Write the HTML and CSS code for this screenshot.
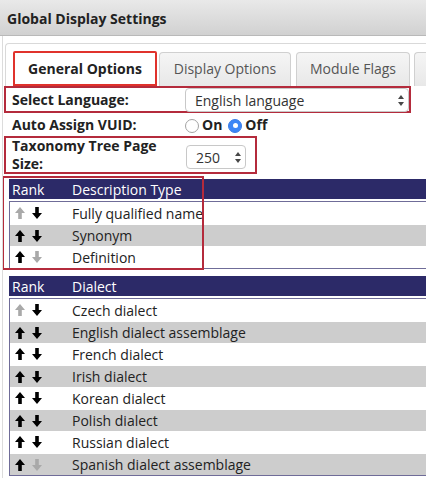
FILE: index.html
```html
<!DOCTYPE html>
<html>
<head>
<meta charset="utf-8">
<link rel="stylesheet" href="styles.css">
</head>
<body>
<div class="titlebar">Global Display Settings</div>
<div class="panel">
  <div class="tabs-nav">
    <div class="tab active">General Options</div>
    <div class="tab t-display">Display Options</div>
    <div class="tab t-module">Module Flags</div>
    <div class="tab t-more"></div>
  </div>

  <div class="field marked">
    <span class="lbl">Select Language:</span>
    <div class="select lang"><span>English language</span>
      <svg class="updown" width="6" height="11" viewBox="0 0 6 11"><path d="M3 0 L6 4 H0Z M0 7 H6 L3 11Z"/></svg>
    </div>
  </div>

  <div class="field plain">
    <span class="lbl">Auto Assign VUID:</span>
    <span class="radio"></span><span class="opt">On</span>
    <span class="radio on"></span><span class="opt">Off</span>
  </div>

  <div class="field marked tall">
    <span class="lbl two">Taxonomy Tree Page<br>Size:</span>
    <div class="select num"><span>250</span>
      <svg class="updown" width="6" height="11" viewBox="0 0 6 11"><path d="M3 0 L6 4 H0Z M0 7 H6 L3 11Z"/></svg>
    </div>
  </div>

  <div class="grid desc">
    <div class="overlay"></div>
    <div class="thead"><span class="hc1">Rank</span><span>Description Type</span></div>
    <div class="tbody">
      <div class="row"><span class="rank"><svg class="arr off" viewBox="0 0 10 12"><path d="M5 0 L10 6 H6.8 V12 H3.2 V6 H0 Z"/></svg><svg class="arr dn" viewBox="0 0 10 12"><path d="M5 0 L10 6 H6.8 V12 H3.2 V6 H0 Z"/></svg></span><span>Fully qualified name</span></div>
      <div class="row alt"><span class="rank"><svg class="arr" viewBox="0 0 10 12"><path d="M5 0 L10 6 H6.8 V12 H3.2 V6 H0 Z"/></svg><svg class="arr dn" viewBox="0 0 10 12"><path d="M5 0 L10 6 H6.8 V12 H3.2 V6 H0 Z"/></svg></span><span>Synonym</span></div>
      <div class="row"><span class="rank"><svg class="arr" viewBox="0 0 10 12"><path d="M5 0 L10 6 H6.8 V12 H3.2 V6 H0 Z"/></svg><svg class="arr dn off" viewBox="0 0 10 12"><path d="M5 0 L10 6 H6.8 V12 H3.2 V6 H0 Z"/></svg></span><span>Definition</span></div>
    </div>
  </div>

  <div class="grid dialect">
    <div class="thead"><span class="hc1">Rank</span><span>Dialect</span></div>
    <div class="tbody">
      <div class="row"><span class="rank"><svg class="arr off" viewBox="0 0 10 12"><path d="M5 0 L10 6 H6.8 V12 H3.2 V6 H0 Z"/></svg><svg class="arr dn" viewBox="0 0 10 12"><path d="M5 0 L10 6 H6.8 V12 H3.2 V6 H0 Z"/></svg></span><span>Czech dialect</span></div>
      <div class="row alt"><span class="rank"><svg class="arr" viewBox="0 0 10 12"><path d="M5 0 L10 6 H6.8 V12 H3.2 V6 H0 Z"/></svg><svg class="arr dn" viewBox="0 0 10 12"><path d="M5 0 L10 6 H6.8 V12 H3.2 V6 H0 Z"/></svg></span><span>English dialect assemblage</span></div>
      <div class="row"><span class="rank"><svg class="arr" viewBox="0 0 10 12"><path d="M5 0 L10 6 H6.8 V12 H3.2 V6 H0 Z"/></svg><svg class="arr dn" viewBox="0 0 10 12"><path d="M5 0 L10 6 H6.8 V12 H3.2 V6 H0 Z"/></svg></span><span>French dialect</span></div>
      <div class="row alt"><span class="rank"><svg class="arr" viewBox="0 0 10 12"><path d="M5 0 L10 6 H6.8 V12 H3.2 V6 H0 Z"/></svg><svg class="arr dn" viewBox="0 0 10 12"><path d="M5 0 L10 6 H6.8 V12 H3.2 V6 H0 Z"/></svg></span><span>Irish dialect</span></div>
      <div class="row"><span class="rank"><svg class="arr" viewBox="0 0 10 12"><path d="M5 0 L10 6 H6.8 V12 H3.2 V6 H0 Z"/></svg><svg class="arr dn" viewBox="0 0 10 12"><path d="M5 0 L10 6 H6.8 V12 H3.2 V6 H0 Z"/></svg></span><span>Korean dialect</span></div>
      <div class="row alt"><span class="rank"><svg class="arr" viewBox="0 0 10 12"><path d="M5 0 L10 6 H6.8 V12 H3.2 V6 H0 Z"/></svg><svg class="arr dn" viewBox="0 0 10 12"><path d="M5 0 L10 6 H6.8 V12 H3.2 V6 H0 Z"/></svg></span><span>Polish dialect</span></div>
      <div class="row"><span class="rank"><svg class="arr" viewBox="0 0 10 12"><path d="M5 0 L10 6 H6.8 V12 H3.2 V6 H0 Z"/></svg><svg class="arr dn" viewBox="0 0 10 12"><path d="M5 0 L10 6 H6.8 V12 H3.2 V6 H0 Z"/></svg></span><span>Russian dialect</span></div>
      <div class="row alt"><span class="rank"><svg class="arr" viewBox="0 0 10 12"><path d="M5 0 L10 6 H6.8 V12 H3.2 V6 H0 Z"/></svg><svg class="arr dn off" viewBox="0 0 10 12"><path d="M5 0 L10 6 H6.8 V12 H3.2 V6 H0 Z"/></svg></span><span>Spanish dialect assemblage</span></div>
    </div>
  </div>
</div>
</body>
</html>
```

FILE: styles.css
```css
html, body {
  margin: 0;
  padding: 0;
  background: #fff;
  overflow: hidden;
}
body {
  font-family: "Open Sans", "Noto Sans", sans-serif;
  font-size: 14px;
  color: #222;
  width: 426px;
  height: 478px;
}

.titlebar {
  box-sizing: border-box;
  height: 36px;
  line-height: 35px;
  padding: 1px 0 0 7px;
  border-bottom: 1px solid #b9b9b9;
  background: linear-gradient(#e9e9e9, #d1d1d1);
  font-weight: 700;
  color: #222;
  white-space: nowrap;
}

.panel {
  margin-left: 2px;
  border-left: 1px solid #dcdcdc;
  height: 442px;
  overflow: hidden;
}

.tabs-nav {
  margin: 7px 0 0 2px;
  border-top: 1px solid #d9d9d9;
  border-left: 1px solid #d9d9d9;
  border-top-left-radius: 4px;
  padding: 7px 0 0 7px;
  display: flex;
  align-items: flex-end;
  white-space: nowrap;
  overflow: hidden;
}
.tab {
  box-sizing: border-box;
  height: 34px;
  line-height: 32px;
  text-align: center;
  border: 1px solid #d0d0d0;
  border-bottom: none;
  border-radius: 4px 4px 0 0;
  background: linear-gradient(#f5f5f5, #e8e8e8);
  color: #555;
  flex: none;
}
.tab.active {
  width: 144px;
  height: 35px;
  line-height: 31px;
  border: 2px solid #e0322c;
  border-radius: 2px 2px 0 0;
  background: #fff;
  color: #222;
  font-weight: 700;
}
.t-display { width: 132px; margin-left: 2px; }
.t-module { width: 114px; margin-left: 5px; }
.t-more { width: 12px; margin-left: 4px; border-right: none; border-radius: 4px 0 0 0; }

.field {
  box-sizing: border-box;
  margin-left: 1px;
  border: 2px solid transparent;
  padding-left: 6px;
  display: flex;
  align-items: center;
  height: 27px;
  width: 407px;
}
.field.marked { border-color: #b42b3c; }
.field.plain { height: 23px; }
.field.tall {
  width: 253px;
  height: 38px;
  padding-right: 9px;
}
.lbl {
  width: 173px;
  flex: none;
  font-weight: 700;
  color: #222;
  white-space: nowrap;
}
.lbl.two {
  line-height: 18px;
  margin-top: -1px;
  white-space: normal;
}

.select {
  box-sizing: border-box;
  height: 24px;
  border: 1px solid #c8c8c8;
  border-radius: 4px;
  background: #fff;
  display: flex;
  align-items: center;
  justify-content: space-between;
  padding: 0 4px 0 9px;
  color: #333;
}
.select.lang {
  width: 224px;
  margin-top: -1px;
  margin-bottom: -2px;
}
.select.num {
  width: 60px;
  margin-left: 1px;
  margin-top: 4px;
}
.updown { fill: #474747; flex: none; }

.radio {
  box-sizing: border-box;
  width: 14px;
  height: 14px;
  border-radius: 50%;
  border: 1px solid #a3a3a3;
  background: #fff;
  flex: none;
  margin-top: 2px;
}
.radio.on {
  border-color: #3a7ee8;
  background: #3d86f6;
  margin-left: 6px;
  display: flex;
  align-items: center;
  justify-content: center;
}
.radio.on::after {
  content: "";
  width: 5px;
  height: 5px;
  border-radius: 50%;
  background: #fff;
}
.opt {
  font-weight: 700;
  margin-left: 3px;
}

.grid {
  margin-left: 6px;
  position: relative;
}
.grid.desc { margin-top: 5px; }
.grid.dialect { margin-top: 7px; }
.overlay {
  position: absolute;
  left: -7px;
  top: -3px;
  width: 202px;
  height: 94px;
  box-sizing: border-box;
  border: 2px solid #b42b3c;
  pointer-events: none;
  z-index: 2;
}
.thead {
  height: 20px;
  background: #2c2a68;
  color: #fff;
  display: flex;
  align-items: center;
  white-space: nowrap;
}
.hc1 {
  width: 60px;
  padding-left: 3px;
  flex: none;
}
.tbody {
  margin-top: 2px;
  border: 1px solid #6f6c98;
  border-right: none;
}
.row {
  box-sizing: border-box;
  height: 22px;
  display: flex;
  align-items: center;
  white-space: nowrap;
  color: #222;
}
.row.alt {
  background: #cdcdcd;
  border-top: 1px solid #fff;
}
.rank {
  width: 57px;
  padding-left: 5px;
  flex: none;
  display: flex;
  gap: 7px;
  align-items: center;
}
.arr {
  width: 10px;
  height: 12px;
  fill: #000;
  flex: none;
}
.arr.dn { transform: rotate(180deg); }
.arr.off { fill: #a9a9a9; }
```
